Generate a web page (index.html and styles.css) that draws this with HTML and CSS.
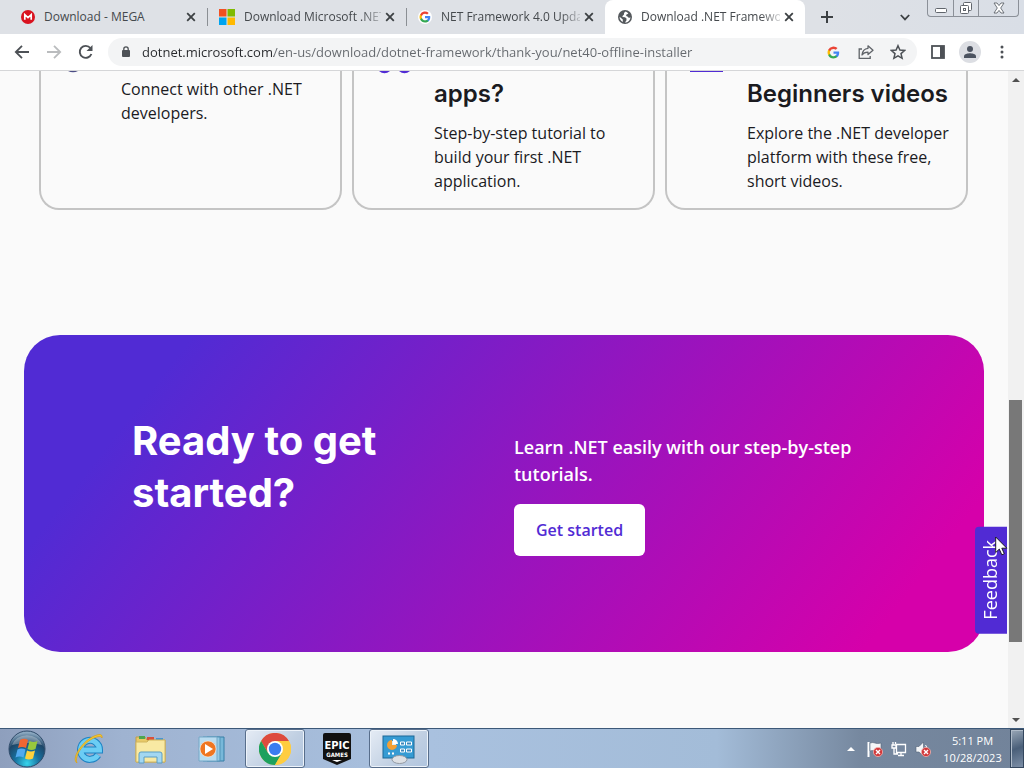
FILE: index.html
```html
<!DOCTYPE html>
<html lang="en">
<head>
<meta charset="utf-8">
<meta name="viewport" content="width=device-width, initial-scale=1">
<title>Download .NET Framework 4.0</title>
<link rel="stylesheet" href="styles.css">
</head>
<body>
<svg class="defs" aria-hidden="true">
  <symbol id="close" viewBox="0 0 10 10"><path d="M1.2 1.2l7.6 7.6M8.8 1.2L1.200 8.800" fill="none" stroke="#3c4043" stroke-width="1.8"/></symbol>
  <symbol id="google" viewBox="0 0 24 24">
    <path fill="#4285f4" d="M22.500 12.300c0-.8-.1-1.500-.2-2.300H12v4.300h5.900a5 5 0 0 1-2.200 3.300v2.800h3.600c2.100-2 3.200-4.800 3.200-8.100z"/>
    <path fill="#34a853" d="M12 23c3 0 5.500-1 7.300-2.700l-3.600-2.700a6.600 6.600 0 0 1-9.900-3.500H2.200v2.800A11 11 0 0 0 12 23z"/>
    <path fill="#fbbc05" d="M5.800 14.100a6.600 6.600 0 0 1 0-4.200V7.100H2.200a11 11 0 0 0 0 9.800z"/>
    <path fill="#ea4335" d="M12 5.400c1.600 0 3.100.6 4.200 1.600l3.200-3.100A11 11 0 0 0 2.200 7.100l3.600 2.800A6.600 6.600 0 0 1 12 5.400z"/>
  </symbol>
  <symbol id="error" viewBox="0 0 10 10"><circle cx="5" cy="5" r="4.600" fill="#d2393b" stroke="#f0b0ac" stroke-width=".8"/><path d="M3 3l4 4M7 3L3 7" stroke="#fff" stroke-width="1.400"/></symbol>
</svg>

<header class="browser">
  <div class="tab-strip">
    <div class="tabs" role="tablist">
      <div class="tab" role="tab">
        <svg class="favicon" viewBox="0 0 14 14"><circle cx="7" cy="7" r="7" fill="#d9121f"/><path d="M3.800 9.800V4.600L7 7.600l3.200-3v5.200" fill="none" stroke="#fff" stroke-width="1.700"/></svg>
        <span class="tab-title">Download - MEGA</span>
        <button class="tab-close" aria-label="Close tab"><svg><use href="#close"/></svg></button>
      </div>
      <div class="tab divided" role="tab">
        <svg class="favicon ms" viewBox="0 0 16 16"><path fill="#f25022" d="M0 0h7.500v7.500H0z"/><path fill="#7fba00" d="M8.500 0H16v7.500H8.500z"/><path fill="#00a4ef" d="M0 8.500h7.500V16H0z"/><path fill="#ffb900" d="M8.500 8.500H16V16H8.500z"/></svg>
        <span class="tab-title">Download Microsoft .NET</span>
        <button class="tab-close" aria-label="Close tab"><svg><use href="#close"/></svg></button>
      </div>
      <div class="tab divided" role="tab">
        <svg class="favicon" viewBox="0 0 14 14"><circle cx="7" cy="7" r="7" fill="#fff"/><use href="#google" x="1" y="1" width="12" height="12"/></svg>
        <span class="tab-title">NET Framework 4.0 Upda</span>
        <button class="tab-close" aria-label="Close tab"><svg><use href="#close"/></svg></button>
      </div>
      <div class="tab active" role="tab" aria-selected="true">
        <svg class="favicon" viewBox="0 0 14 14"><circle cx="7" cy="7" r="7" fill="#54585c"/><path fill="#fff" d="M7.500 1.500L6 3v1.500L4.500 6v1l2.500.2 1.500 1.300v1.700L7 12.500c3 0 5.400-2.400 5.400-5.300L11 8 9.500 6.500 8.200 6V4.700l2.200-1.200c-.8-.9-1.800-1.600-2.900-2zM1.600 6.800L4.800 9.600v2.300A5.500 5.500 0 0 1 1.600 6.800z"/></svg>
        <span class="tab-title">Download .NET Framewo</span>
        <button class="tab-close" aria-label="Close tab"><svg><use href="#close"/></svg></button>
      </div>
    </div>
    <button class="new-tab" aria-label="New tab"><svg width="12" height="12" viewBox="0 0 12 12"><path d="M6 0v12M0 6h12" stroke="#3c4043" stroke-width="2"/></svg></button>
    <button class="tab-search" aria-label="Search tabs"><svg width="10" height="7" viewBox="0 0 10 7"><path d="M.8 1L5 5.400 9.200 1" fill="none" stroke="#3c4043" stroke-width="1.800"/></svg></button>
    <div class="window-controls">
      <button aria-label="Minimize"><svg width="14" height="12" viewBox="0 0 14 12"><rect x="1.500" y="6.500" width="11" height="4" rx="1" fill="#fff" stroke="#60656c"/></svg></button>
      <button aria-label="Restore"><svg width="14" height="14" viewBox="0 0 14 14" fill="#fff" stroke="#60656c"><rect x="4.500" y="1.500" width="8" height="8" rx="1"/><rect x="1.500" y="4.500" width="8" height="8" rx="1"/><rect x="4.500" y="7.500" width="2" height="2"/></svg></button>
      <button class="wide" aria-label="Close"><svg width="12" height="12" viewBox="0 0 12 12"><path d="M1 1h3l2 2.600L8 1h3L7.700 6 11 11H8L6 8.400 4 11H1l3.300-5z" fill="#fff" stroke="#60656c" stroke-width=".9"/></svg></button>
    </div>
  </div>

  <div class="toolbar">
    <button aria-label="Back"><svg width="16" height="16" viewBox="0 0 16 16"><path d="M15 8H2M8 1.800L1.800 8 8 14.200" fill="none" stroke="#4d5156" stroke-width="1.800"/></svg></button>
    <button aria-label="Forward"><svg width="16" height="16" viewBox="0 0 16 16"><path d="M1 8h13M8 1.800L14.200 8 8 14.200" fill="none" stroke="#babcbe" stroke-width="1.800"/></svg></button>
    <button aria-label="Reload"><svg width="16" height="16" viewBox="0 0 16 16"><path d="M13.400 10A6 6 0 1 1 12.400 4" fill="none" stroke="#4d5156" stroke-width="1.900"/><path d="M14.500 1v6h-6z" fill="#4d5156"/></svg></button>
    <div class="omnibox">
      <svg width="8" height="12" viewBox="0 0 8 12"><rect y="4" width="8" height="7" rx="1" fill="#4d5156"/><path d="M1.800 5V3a2.200 2.200 0 0 1 4.400 0V5" fill="none" stroke="#4d5156" stroke-width="1.300"/></svg>
      <input class="url" type="text" aria-label="Address" value="dotnet.microsoft.com/en-us/download/dotnet-framework/thank-you/net40-offline-installer">
      <button aria-label="Search with Google"><svg width="13" height="13"><use href="#google"/></svg></button>
      <button aria-label="Share"><svg width="16" height="16" viewBox="0 0 16 16" fill="none" stroke="#5f6368" stroke-width="1.300"><path d="M4 5H1.200v9.300h11V12"/><path d="M10 1.800l5 4.400-5 4.400V8.200C7.200 8.200 5.300 9 4 11c.3-3.700 2.600-6.300 6-6.700z" stroke-linejoin="round"/></svg></button>
      <button aria-label="Bookmark"><svg width="16" height="16" viewBox="0 0 16 16"><path d="M8 1.700l1.900 4.400 4.700.4-3.600 3.100 1.100 4.700L8 11.800l-4.100 2.500L5 9.600 1.400 6.500l4.700-.4z" fill="none" stroke="#4d5156" stroke-width="1.500"/></svg></button>
    </div>
    <button class="panel" aria-label="Side panel"><svg width="14" height="14" viewBox="0 0 14 14"><rect x="1" y="1" width="12" height="12" fill="none" stroke="#4d5156" stroke-width="1.800"/><path d="M9 1h4v12H9z" fill="#4d5156"/></svg></button>
    <button class="profile" aria-label="Profile"><svg width="14" height="14" viewBox="0 0 14 14" fill="#4c5360"><circle cx="7" cy="4" r="3"/><path d="M1 13v-1.800C1 9 5 8.200 7 8.200s6 .8 6 3V13z"/></svg></button>
    <button class="menu" aria-label="Menu"><svg width="4" height="14" viewBox="0 0 4 14" fill="#4d5156"><circle cx="2" cy="2" r="1.500"/><circle cx="2" cy="7" r="1.500"/><circle cx="2" cy="12" r="1.500"/></svg></button>
  </div>
</header>

<div class="viewport">
  <main class="page">
    <section class="cards">
      <article class="card text-only">
        <svg class="card-icon" viewBox="0 0 41 4"><path d="M12 0h10q-5 2.500-10 0z" fill="#4b4d85"/></svg>
        <div><p>Connect with other .NET developers.</p></div>
      </article>
      <article class="card">
        <svg class="card-icon" viewBox="0 0 41 4"><path d="M10 0h11q-5.500 4.500-11 0zM30 0h11q-5.500 4.500-11 0z" fill="#512bd4"/></svg>
        <div><h3>apps?</h3><p>Step-by-step tutorial to build your first .NET application.</p></div>
      </article>
      <article class="card">
        <svg class="card-icon" viewBox="0 0 41 4"><path d="M8 0h33v1H8z" fill="#512bd4"/></svg>
        <div><h3>Beginners videos</h3><p>Explore the .NET developer platform with these free, short videos.</p></div>
      </article>
    </section>

    <section class="banner">
      <h2>Ready to get started?</h2>
      <div class="banner-body">
        <p>Learn .NET easily with our step-by-step tutorials.</p>
        <a class="cta" href="#start">Get started</a>
      </div>
    </section>
  </main>

  <div class="scrollbar">
    <button aria-label="Scroll up"><svg width="8" height="4" viewBox="0 0 8 4"><path d="M0 4l4-4 4 4z" fill="#505050"/></svg></button>
    <div class="track"><div class="thumb"></div></div>
    <button aria-label="Scroll down"><svg width="8" height="4" viewBox="0 0 8 4"><path d="M0 0l4 4 4-4z" fill="#505050"/></svg></button>
  </div>
  <button class="feedback">Feedback</button>
  <svg class="pointer" width="14" height="20" viewBox="0 0 14 20"><path d="M.7 1v15.500l3.600-3.400 2.500 5.700 2.500-1.100-2.500-5.500h5z" fill="#fff" stroke="#111" stroke-width=".9"/></svg>
</div>

<footer class="taskbar">
  <button class="start" aria-label="Start">
    <svg width="38" height="38" viewBox="0 0 38 38">
      <defs>
        <radialGradient id="orb" cx=".5" cy=".9" r=".85"><stop offset="0" stop-color="#37d4ec"/><stop offset=".4" stop-color="#17719f"/><stop offset=".75" stop-color="#1e4668"/><stop offset="1" stop-color="#8ba8c0"/></radialGradient>
      </defs>
      <circle cx="19" cy="19" r="18" fill="url(#orb)" stroke="#304b6a"/>
      <path d="M4 15a15.500 13 0 0 1 30 0q-15-4-30 0z" fill="#fff" opacity=".3"/>
      <path d="M12 10q4-2.500 8 0l-2 8q-4-2-8 0z" fill="#ef6632"/><path d="M21.500 11q4 2 8 0l-2 8q-4 2-8 0z" fill="#98c83d"/><path d="M9.500 19.500q4-2 8 0l-2 8q-4-2-8 0z" fill="#52aaf0"/><path d="M19 20.500q4 2 8 0l-2 8q-4 2-8 0z" fill="#ffd23d"/>
    </svg>
  </button>
  <nav class="apps">
    <button aria-label="Internet Explorer"><svg width="32" height="32" viewBox="0 0 32 32">
      <path d="M25 22A9.500 9.500 0 1 1 26.500 17H9" fill="none" stroke="#1d83c4" stroke-width="7"/><path d="M25 22A9.500 9.500 0 1 1 26.500 17H9" fill="none" stroke="#6bcdf4" stroke-width="5"/>
      <path d="M4 30C-2 26 8 10 19 4c6-3 11-4 10 1-1-3-6-1-10 1C10 11 1 23 4 30z" fill="#f7c92e" stroke="#d59d17" stroke-width=".7"/></svg></button>
    <button aria-label="File Explorer"><svg width="34" height="32" viewBox="0 0 34 32">
      <path d="M2 4h9l2 3h18v22H2z" fill="#e8c967" stroke="#bf9d4a"/><path d="M5 3h6v3H5z" fill="#4da650"/><path d="M13 4h7v3h-7z" fill="#d95139"/><path d="M22 5h7v3h-7z" fill="#4b96cc"/><path d="M2 9h11l2-2h16v22H2z" fill="#f8e9a3" stroke="#d2b65e"/>
      <path d="M5 30V21q0-2 2-2h19q2 0 2 2v9h-5v-6H10v6z" fill="#a3d7f1" stroke="#5a9dc4"/></svg></button>
    <button aria-label="Windows Media Player"><svg width="30" height="28" viewBox="0 0 30 28">
      <path d="M9 2h17v24H9z" fill="#78b8d9" stroke="#367fa6"/><path d="M5 2h17v24H5z" fill="#94cae5" stroke="#5193b8"/><path d="M1 2h18v24H1z" fill="#b9dcf0" stroke="#75a8c7"/>
      <circle cx="10" cy="14" r="8" fill="#ef7621" stroke="#fff" stroke-opacity=".5"/><path d="M7 9l8 5-8 5z" fill="#fff"/></svg></button>
    <button class="running" aria-label="Google Chrome"><svg width="32" height="32" viewBox="0 0 32 32">
      <circle cx="16" cy="16" r="16" fill="#ffcd40"/><path d="M16 8h13.900A16 16 0 0 0 2.100 8L9.100 20 16 8z" fill="#dd4b3e"/><path d="M2.100 8A16 16 0 0 0 16 32l7-12H9.100z" fill="#1da15e"/><path d="M16 8h13.900A16 16 0 0 1 16 32l7-12z" fill="#ffcd40"/>
      <circle cx="16" cy="16" r="8" fill="#fff"/><circle cx="16" cy="16" r="6.200" fill="#3a7cf0"/></svg></button>
    <button aria-label="Epic Games"><svg width="28" height="32" viewBox="0 0 28 32">
      <path d="M2 0h24q2 0 2 2v24L14 32 0 26V2q0-2 2-2z" fill="#111"/>
      <g class="epic" fill="#fff" text-anchor="middle"><text x="14" y="16" font-size="11">EPIC</text><text x="14" y="24" font-size="6">GAMES</text></g><path d="M9 27h10l-5 2z" fill="#fff"/></svg></button>
    <button class="running" aria-label="Control Panel"><svg width="34" height="30" viewBox="0 0 34 30">
      <rect x="1" y="2" width="31" height="22" fill="#369bd3" stroke="#1d6897"/><circle cx="10" cy="11" r="4" fill="#dceff8"/><path d="M10 11V6a5 5 0 1 0 5 5z" fill="#f3a034"/><path d="M11 5a5 5 0 0 1 5 5h-5z" fill="#fff"/><path d="M18.500 8h4v3h-4zM24.500 8h5v3h-5zM18.500 15h4v3h-4zM24.500 15h5v3h-5z" fill="#3d86ba" stroke="#fff"/><path d="M6 19.500h2m2 0h2" stroke="#fff" stroke-width="2"/><ellipse cx="17.500" cy="25.500" rx="7.500" ry="4" fill="#dde0e4" stroke="#9299a2"/></svg></button>
  </nav>
  <div class="tray">
    <button aria-label="Show hidden icons"><svg width="8" height="4" viewBox="0 0 8 4"><path d="M0 4l4-4 4 4z" fill="#fff"/></svg></button>
    <button aria-label="Action Center"><svg width="16" height="16" viewBox="0 0 16 16"><path d="M1.500 1v15" stroke="#fff" stroke-width="2"/><path d="M3 2q3-1 5 0t6 0v8q-3 1-6 0t-5 0z" fill="#f4f6f8" stroke="#566578" stroke-width=".6"/><use href="#error" x="6" y="6" width="10" height="10"/></svg></button>
    <button aria-label="Network"><svg width="16" height="16" viewBox="0 0 16 16" fill="none" stroke="#fff" stroke-width="1.300"><path d="M5.500 3.500h9v8h-9zM7 14.500h6M10 11.500v3M2 1v3M4.500 1v2M1 4h4v3H1zM3 7v6h4"/></svg></button>
    <button aria-label="Volume muted"><svg width="16" height="16" viewBox="0 0 16 16"><path d="M1 5.500h3L8.500 1v14L4 11H1z" fill="#f3f5f7" stroke="#536275" stroke-width=".6"/><path d="M10.500 4q2 2 1 5" fill="none" stroke="#fff"/><use href="#error" x="6" y="6" width="10" height="10"/></svg></button>
    <div class="clock"><time>5:11 PM</time><time>10/28/2023</time></div>
    <button class="show-desktop" aria-label="Show desktop"></button>
  </div>
</footer>
</body>
</html>
```
FILE: styles.css
```css
* { box-sizing: border-box; }

body {
  margin: 0;
  height: 100vh;
  display: flex;
  flex-direction: column;
  overflow: hidden;
  background: #fafafa;
  color: #1b1b1f;
  font-family: "Open Sans", "Noto Sans", sans-serif;
  font-size: 16px;
  line-height: 24px;
}

h2, h3, p { margin: 0; }
svg { display: block; flex: none; }
.defs { position: absolute; width: 0; height: 0; }

button {
  display: flex;
  align-items: center;
  justify-content: center;
  flex: none;
  padding: 0;
  border: 0;
  background: none;
  font: inherit;
}

/* Tab strip */
.tab-strip {
  display: flex;
  height: 34px;
  background: linear-gradient(90deg, #dee1e6 80%, #d9dee6);
}
.tabs {
  display: grid;
  grid-template-columns: 207fr 199fr 199fr 200fr;
  flex: 0 1 805px;
  min-width: 0;
}
.tab {
  display: flex;
  align-items: center;
  min-width: 0;
  padding: 0 7px 0 21px;
  font-size: 12px;
  color: #45494d;
}
.tab.active {
  padding-left: 13px;
  background: #fff;
  border-radius: 8px 8px 0 0;
}
.divided {
  padding-left: 12px;
  background: linear-gradient(#8b8f94, #8b8f94) 0 8px / 1px 18px no-repeat;
}
.favicon { width: 14px; height: 14px; }
.favicon.ms { width: 16px; height: 16px; }
.tab-title {
  flex: 1;
  min-width: 0;
  margin-left: 9px;
  overflow: hidden;
  white-space: nowrap;
}
.divided .tab-title, .active .tab-title { mask-image: linear-gradient(90deg, #000 86%, transparent 104%); }
.tab-close { width: 18px; height: 18px; }
.tab-close svg { width: 10px; height: 10px; }
.new-tab { width: 44px; }
.tab-search { width: 32px; margin-left: auto; }
.window-controls {
  display: flex;
  align-self: flex-start;
  height: 17px;
  margin: 0 5px 0 6px;
  border: 1px solid #8b9098;
  border-top: 0;
  border-radius: 0 0 4px 4px;
}
.window-controls button { width: 25px; }
.window-controls button + button { border-left: 1px solid #8b9098; }
.window-controls .wide { width: 40px; }

/* Toolbar */
.toolbar {
  display: flex;
  align-items: center;
  height: 37px;
  padding: 0 12px 0 6px;
  background: #fff;
  border-bottom: 1px solid #d5d6d8;
}
.toolbar button { width: 32px; height: 28px; }
.omnibox {
  display: flex;
  align-items: center;
  flex: 1;
  height: 28px;
  margin-left: 6px;
  padding: 0 4px 0 14px;
  gap: 1px;
  border-radius: 14px;
  background: #f3f4f5;
}
.url {
  flex: 1;
  min-width: 0;
  margin-left: 11px;
  padding: 0;
  border: 0;
  outline: 0;
  font: 13px/20px "Open Sans", "Noto Sans", sans-serif;
  color: transparent;
  background: linear-gradient(90deg, #27292c 132px, #64686d 132px);
  background-clip: text;
}
.omnibox button { width: 31px; }
.toolbar .panel { width: 30px; margin-left: 6px; }
.toolbar .profile {
  width: 22px;
  height: 22px;
  margin: 0 11px 0 6px;
  border-radius: 50%;
  background: #dcdee3;
}
.toolbar .menu { width: 20px; }

/* Page */
.viewport {
  position: relative;
  display: flex;
  flex: 1;
  min-height: 0;
}
.page {
  flex: 1;
  min-width: 0;
  overflow: hidden;
  padding: 0 24px;
}
.cards {
  display: grid;
  grid-template-columns: repeat(3, 1fr);
  gap: 10px;
  padding: 0 16px 0 15px;
}
.card {
  display: flex;
  gap: 24px;
  padding: 8px 15px 15px;
  border: 2px solid #c4c4c4;
  border-top: 0;
  border-radius: 0 0 20px 20px;
}
.card > div { flex: 1; min-width: 0; }
.card.text-only { padding-top: 6px; }
.card-icon { width: 41px; height: 4px; margin-top: -8px; }
.text-only .card-icon { margin-top: -6px; }
h2, h3 { font-family: Inter, "Open Sans", sans-serif; font-weight: 700; }
h3 {
  margin-bottom: 12px;
  font-size: 24px;
  line-height: 30px;
  white-space: nowrap;
  font-weight: 600;
}

.banner {
  display: grid;
  grid-template-columns: 1fr 1fr;
  gap: 20px;
  margin-top: 125px;
  padding: 80px 108px 96px;
  border-radius: 36px;
  background: linear-gradient(128deg, #512bd4 14%, #d600aa 90%);
  color: #fff;
}
h2 { font-size: 40px; line-height: 52px; }
.banner-body { padding-top: 19px; }
.banner-body p {
  margin-bottom: 16px;
  font-size: 18px;
  font-weight: 600;
  line-height: 27px;
}
.cta {
  display: inline-block;
  padding: 14px 22px;
  border-radius: 6px;
  background: #fff;
  color: #512bd4;
  font-weight: 600;
  text-decoration: none;
  vertical-align: top;
}

.scrollbar {
  display: flex;
  flex-direction: column;
  width: 16px;
  background: #f1f1f1;
}
.scrollbar button { height: 17px; }
.track { display: flex; flex-direction: column; flex: 1; padding: 0 2px 0 1px; }
.track::before { content: ""; flex: 312; }
.track::after { content: ""; flex: 69; }
.thumb { flex: 242; background: #787878; }

.feedback {
  position: absolute;
  right: 17px;
  bottom: 94px;
  padding: 14px 6px 13px 8px;
  border-radius: 0 4px 4px 0;
  background: #512bd4;
  color: #fff;
  font-size: 18px;
  line-height: 18px;
  writing-mode: vertical-rl;
  transform: rotate(180deg);
}
.pointer { position: absolute; right: 15px; bottom: 172px; }

/* Taskbar */
.taskbar {
  display: flex;
  height: 40px;
  border-top: 1px solid #3c5878;
  background: linear-gradient(90deg, #8e9fbd, #9fb3d1 12%, #a9c1df 42%, #a3bcd8 70%, #76889f 84%, #72839a);
}
.start { width: 54px; }
.apps { display: flex; gap: 2px; margin-left: 5px; }
.apps button { width: 60px; border-radius: 3px; }
.apps .running {
  border: 1px solid #586e8b;
  background: linear-gradient(135deg, #e5ecf5, #c0cfe2 60%, #b0c5df);
  box-shadow: inset 0 0 0 1px #edf3fa;
}
.epic { font-family: "Liberation Sans Narrow", "DejaVu Sans Condensed", sans-serif; font-weight: 700; }
.epic text { font-family: inherit; }
.tray { display: flex; margin-left: auto; color: #fff; }
.tray button { width: 24px; }
.clock {
  display: flex;
  flex-direction: column;
  justify-content: center;
  width: 75px;
  text-align: center;
  font-size: 11px;
  line-height: 17px;
}
.tray .show-desktop {
  width: 14px;
  border: 1px solid #34475e;
  background: linear-gradient(160deg, #9aa8b8, #4a5f79 50%, #7c8ea6);
  box-shadow: inset 1px 1px 0 #afbbc9;
}
```
